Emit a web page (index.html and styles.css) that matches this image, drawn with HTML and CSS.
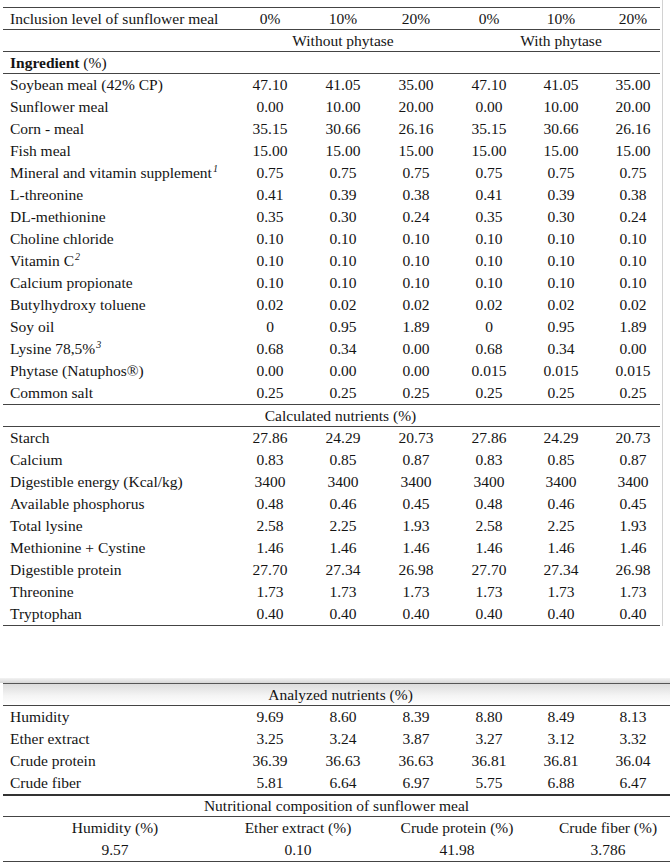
FILE: index.html
```html
<!DOCTYPE html>
<html>
<head>
<meta charset="utf-8">
<link rel="stylesheet" href="styles.css">
</head>
<body>
<div class="t1">
  <div class="row head">
    <div class="lbl">Inclusion level of sunflower meal</div>
    <div class="c">0%</div><div class="c">10%</div><div class="c">20%</div>
    <div class="c">0%</div><div class="c">10%</div><div class="c">20%</div>
  </div>
  <div class="row ruled">
    <div class="lbl"></div>
    <div class="c span3">Without phytase</div>
    <div class="c span3">With phytase</div>
  </div>
  <div class="row ruled">
    <div class="lbl"><b>Ingredient</b> (%)</div>
  </div>
  <div class="row"><div class="lbl">Soybean meal (42% CP)</div><div class="c">47.10</div><div class="c">41.05</div><div class="c">35.00</div><div class="c">47.10</div><div class="c">41.05</div><div class="c">35.00</div></div>
  <div class="row"><div class="lbl">Sunflower meal</div><div class="c">0.00</div><div class="c">10.00</div><div class="c">20.00</div><div class="c">0.00</div><div class="c">10.00</div><div class="c">20.00</div></div>
  <div class="row"><div class="lbl">Corn - meal</div><div class="c">35.15</div><div class="c">30.66</div><div class="c">26.16</div><div class="c">35.15</div><div class="c">30.66</div><div class="c">26.16</div></div>
  <div class="row"><div class="lbl">Fish meal</div><div class="c">15.00</div><div class="c">15.00</div><div class="c">15.00</div><div class="c">15.00</div><div class="c">15.00</div><div class="c">15.00</div></div>
  <div class="row"><div class="lbl">Mineral and vitamin supplement<sup class="fn">1</sup></div><div class="c">0.75</div><div class="c">0.75</div><div class="c">0.75</div><div class="c">0.75</div><div class="c">0.75</div><div class="c">0.75</div></div>
  <div class="row"><div class="lbl">L-threonine</div><div class="c">0.41</div><div class="c">0.39</div><div class="c">0.38</div><div class="c">0.41</div><div class="c">0.39</div><div class="c">0.38</div></div>
  <div class="row"><div class="lbl">DL-methionine</div><div class="c">0.35</div><div class="c">0.30</div><div class="c">0.24</div><div class="c">0.35</div><div class="c">0.30</div><div class="c">0.24</div></div>
  <div class="row"><div class="lbl">Choline chloride</div><div class="c">0.10</div><div class="c">0.10</div><div class="c">0.10</div><div class="c">0.10</div><div class="c">0.10</div><div class="c">0.10</div></div>
  <div class="row"><div class="lbl">Vitamin C<sup class="fn">2</sup></div><div class="c">0.10</div><div class="c">0.10</div><div class="c">0.10</div><div class="c">0.10</div><div class="c">0.10</div><div class="c">0.10</div></div>
  <div class="row"><div class="lbl">Calcium propionate</div><div class="c">0.10</div><div class="c">0.10</div><div class="c">0.10</div><div class="c">0.10</div><div class="c">0.10</div><div class="c">0.10</div></div>
  <div class="row"><div class="lbl">Butylhydroxy toluene</div><div class="c">0.02</div><div class="c">0.02</div><div class="c">0.02</div><div class="c">0.02</div><div class="c">0.02</div><div class="c">0.02</div></div>
  <div class="row"><div class="lbl">Soy oil</div><div class="c">0</div><div class="c">0.95</div><div class="c">1.89</div><div class="c">0</div><div class="c">0.95</div><div class="c">1.89</div></div>
  <div class="row"><div class="lbl">Lysine 78,5%<sup class="fn">3</sup></div><div class="c">0.68</div><div class="c">0.34</div><div class="c">0.00</div><div class="c">0.68</div><div class="c">0.34</div><div class="c">0.00</div></div>
  <div class="row"><div class="lbl">Phytase (Natuphos®)</div><div class="c">0.00</div><div class="c">0.00</div><div class="c">0.00</div><div class="c">0.015</div><div class="c">0.015</div><div class="c">0.015</div></div>
  <div class="row"><div class="lbl">Common salt</div><div class="c">0.25</div><div class="c">0.25</div><div class="c">0.25</div><div class="c">0.25</div><div class="c">0.25</div><div class="c">0.25</div></div>
  <div class="row section"><div class="full">Calculated nutrients (%)</div></div>
  <div class="row"><div class="lbl">Starch</div><div class="c">27.86</div><div class="c">24.29</div><div class="c">20.73</div><div class="c">27.86</div><div class="c">24.29</div><div class="c">20.73</div></div>
  <div class="row"><div class="lbl">Calcium</div><div class="c">0.83</div><div class="c">0.85</div><div class="c">0.87</div><div class="c">0.83</div><div class="c">0.85</div><div class="c">0.87</div></div>
  <div class="row"><div class="lbl">Digestible energy (Kcal/kg)</div><div class="c">3400</div><div class="c">3400</div><div class="c">3400</div><div class="c">3400</div><div class="c">3400</div><div class="c">3400</div></div>
  <div class="row"><div class="lbl">Available phosphorus</div><div class="c">0.48</div><div class="c">0.46</div><div class="c">0.45</div><div class="c">0.48</div><div class="c">0.46</div><div class="c">0.45</div></div>
  <div class="row"><div class="lbl">Total lysine</div><div class="c">2.58</div><div class="c">2.25</div><div class="c">1.93</div><div class="c">2.58</div><div class="c">2.25</div><div class="c">1.93</div></div>
  <div class="row"><div class="lbl">Methionine + Cystine</div><div class="c">1.46</div><div class="c">1.46</div><div class="c">1.46</div><div class="c">1.46</div><div class="c">1.46</div><div class="c">1.46</div></div>
  <div class="row"><div class="lbl">Digestible protein</div><div class="c">27.70</div><div class="c">27.34</div><div class="c">26.98</div><div class="c">27.70</div><div class="c">27.34</div><div class="c">26.98</div></div>
  <div class="row"><div class="lbl">Threonine</div><div class="c">1.73</div><div class="c">1.73</div><div class="c">1.73</div><div class="c">1.73</div><div class="c">1.73</div><div class="c">1.73</div></div>
  <div class="row last"><div class="lbl">Tryptophan</div><div class="c">0.40</div><div class="c">0.40</div><div class="c">0.40</div><div class="c">0.40</div><div class="c">0.40</div><div class="c">0.40</div></div>
</div>

<div class="band"></div>
<div class="t2">
  <div class="row section shaded"><div class="full">Analyzed nutrients (%)</div></div>
  <div class="row"><div class="lbl">Humidity</div><div class="c">9.69</div><div class="c">8.60</div><div class="c">8.39</div><div class="c">8.80</div><div class="c">8.49</div><div class="c">8.13</div></div>
  <div class="row"><div class="lbl">Ether extract</div><div class="c">3.25</div><div class="c">3.24</div><div class="c">3.87</div><div class="c">3.27</div><div class="c">3.12</div><div class="c">3.32</div></div>
  <div class="row"><div class="lbl">Crude protein</div><div class="c">36.39</div><div class="c">36.63</div><div class="c">36.63</div><div class="c">36.81</div><div class="c">36.81</div><div class="c">36.04</div></div>
  <div class="row thick"><div class="lbl">Crude fiber</div><div class="c">5.81</div><div class="c">6.64</div><div class="c">6.97</div><div class="c">5.75</div><div class="c">6.88</div><div class="c">6.47</div></div>
  <div class="row comp-title"><div class="full mid">Nutritional composition of sunflower meal</div></div>
  <div class="row four"><div class="q">Humidity (%)</div><div class="q">Ether extract (%)</div><div class="q">Crude protein (%)</div><div class="q">Crude fiber (%)</div></div>
  <div class="row four end"><div class="q">9.57</div><div class="q">0.10</div><div class="q">41.98</div><div class="q">3.786</div></div>
</div>
</body>
</html>
```

FILE: styles.css
```css
html, body {
  margin: 0;
  padding: 0;
  background: #ffffff;
}

body {
  font-family: "Liberation Serif", "Times New Roman", serif;
  font-size: 15.5px;
  color: #141414;
  width: 670px;
}

.t1 {
  margin-left: 3px;
  width: 657px;
  padding-top: 7px;
  padding-right: 2px;
  border-right: 1px solid #d2d2d2;
}

.t2 {
  margin-left: 3px;
  width: 667px;
}

.row {
  display: grid;
  grid-template-columns: 231px 72px 74px 72px 74px 70px 74px;
  align-items: center;
  height: 22px;
  box-sizing: border-box;
  white-space: nowrap;
}

.lbl {
  padding-left: 7px;
}

.lbl b {
  font-weight: bold;
}

.c {
  text-align: center;
}

.span3 {
  grid-column: span 3;
}

.full {
  grid-column: 1 / -1;
  text-align: center;
  padding-left: 8px;
}

.full.mid {
  padding-left: 0;
}

.head {
  height: 23px;
  border-top: 1px solid #444444;
  border-bottom: 1px solid #444444;
}

.ruled {
  border-bottom: 1px solid #444444;
}

.section {
  height: 23px;
  border-top: 1px solid #444444;
  border-bottom: 1px solid #444444;
}

.last {
  height: 23px;
  border-bottom: 1px solid #444444;
}

.band {
  margin-top: 52px;
  height: 5px;
  background: linear-gradient(#f3f3f3, #d6d6d6);
}

.shaded {
  border-top: 1px solid #555555;
  background: linear-gradient(#dcdcdc, #f4f4f4 55%, #ffffff);
}

.thick {
  height: 24px;
  border-bottom: 2px solid #333333;
}

.comp-title {
  height: 21px;
  border-bottom: 1px solid #444444;
}

.four {
  grid-template-columns: 224px 142px 176px 126px;
}

.q {
  display: flex;
  justify-content: center;
}

.end {
  height: 23px;
  border-bottom: 1px solid #444444;
}

.fn {
  font-style: italic;
  font-size: 10px;
  line-height: 0;
  vertical-align: 6px;
  margin-left: 1px;
}
```
